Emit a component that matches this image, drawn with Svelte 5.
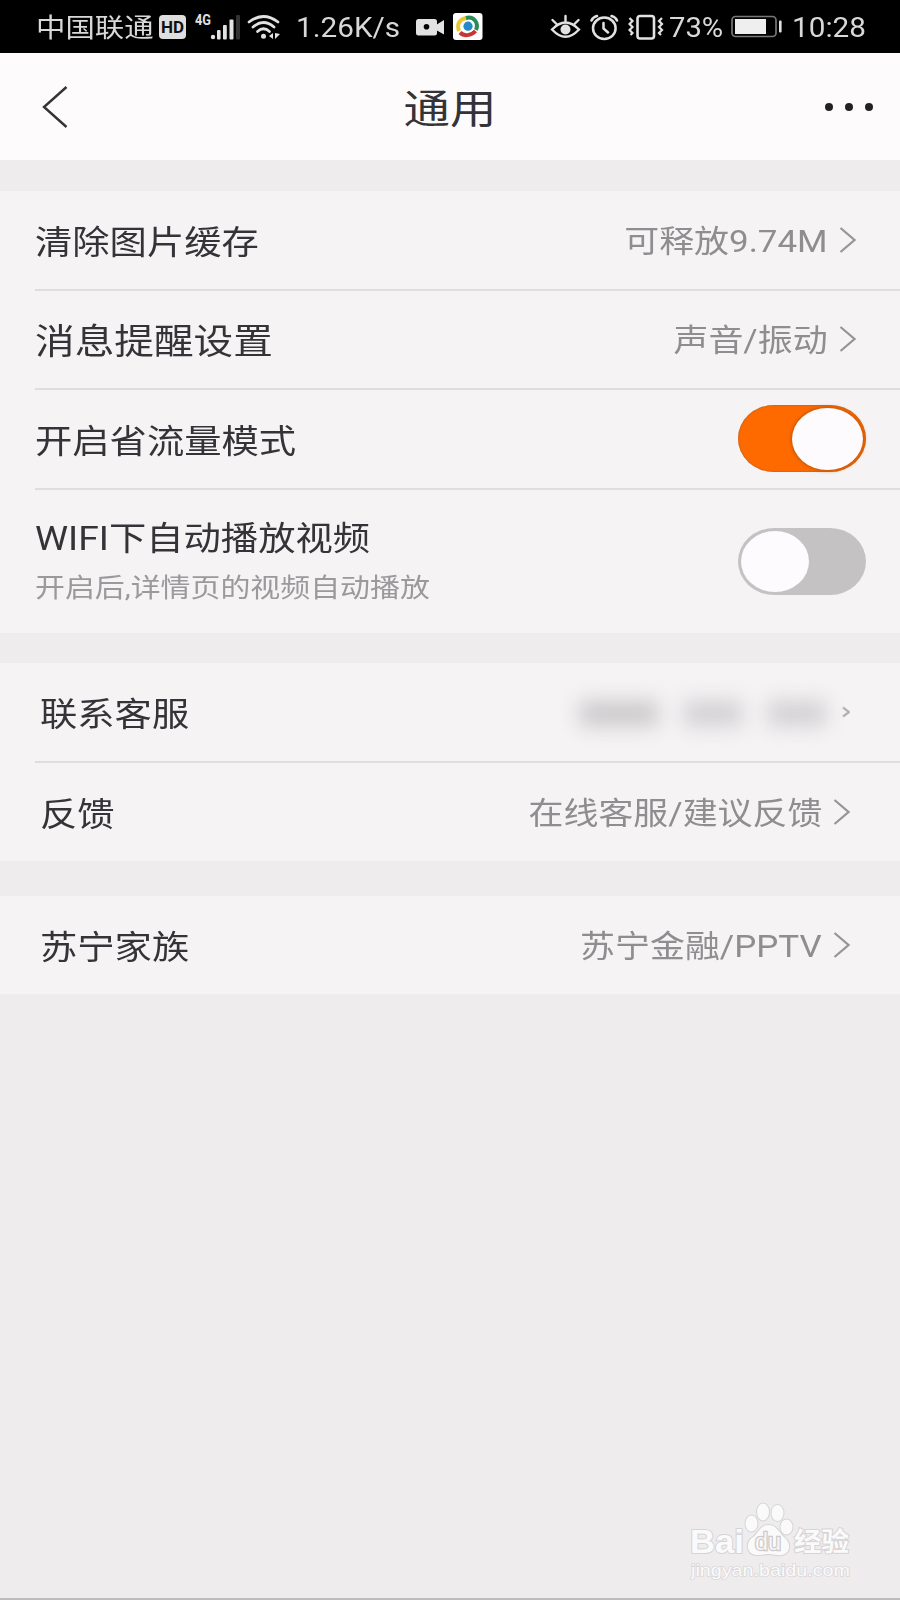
<script lang="ts">
	type Row = {
		label: string;
		value?: string;
		hint?: string;
		toggle?: boolean;
		masked?: boolean;
		large?: boolean;
	};

	type Group = { id: string; inset?: boolean; rows: Row[] };

	let groups: Group[] = $state([
		{
			id: 'general',
			rows: [
				{ label: '清除图片缓存', value: '可释放9.74M' },
				{ label: '消息提醒设置', value: '声音/振动', large: true },
				{ label: '开启省流量模式', toggle: true },
				{ label: 'WIFI下自动播放视频', hint: '开启后,详情页的视频自动播放', toggle: false }
			]
		},
		{
			id: 'support',
			inset: true,
			rows: [
				{ label: '联系客服', masked: true },
				{ label: '反馈', value: '在线客服/建议反馈' }
			]
		},
		{
			id: 'family',
			inset: true,
			rows: [{ label: '苏宁家族', value: '苏宁金融/PPTV' }]
		}
	]);
</script>

<div class="screen">
	<div class="status">
		<span class="carrier">中国联通</span>
		<span class="hd">HD</span>
		<svg class="signal" width="46" height="28" viewBox="0 0 46 28" aria-hidden="true">
			<text x="0" y="12" textLength="16" lengthAdjust="spacingAndGlyphs">4G</text>
			<circle cx="18" cy="24" r="2.2" />
			<rect x="22" y="17" width="3.6" height="9.5" rx="1" />
			<rect x="28" y="12" width="3.8" height="14.5" rx="1" />
			<rect x="34.5" y="6.5" width="4" height="20" rx="1" />
			<rect x="41" y="2" width="4" height="24.5" rx="1" fill="#333" />
		</svg>
		<svg class="wifi" width="35" height="28" viewBox="0 0 35 28" aria-hidden="true">
			<g fill="none" stroke="#e2e2e2" stroke-width="2.7" stroke-linecap="round">
				<path d="M2 9Q16.5-2 31 9" />
				<path d="M6 14Q16.5 5 27 14" />
				<path d="M10.5 18.5Q16.5 13 22.5 18.5" />
			</g>
			<circle cx="16.5" cy="23.3" r="2.5" />
			<path d="M26 20v6l-4-3zM28 20v6l5-5z" />
		</svg>
		<span class="speed">1.26K/s</span>
		<svg class="camera" width="29" height="19" viewBox="0 0 29 19" aria-hidden="true">
			<rect x="0" y="1" width="21" height="16.5" rx="2.5" />
			<path d="M20 7l8-5v14.5L20 12z" />
			<circle cx="10.5" cy="8.7" r="2.8" fill="#000" />
		</svg>
		<svg class="app" width="30" height="28" viewBox="0 0 30 28" aria-hidden="true">
			<rect width="29.5" height="27" rx="3" fill="#fff" />
			<g fill="none" stroke-width="4">
				<path d="M6 18C3 10 8 5 15 5" stroke="#e9c632" />
				<path d="M13 5C21 3 26 10 23 17" stroke="#2b8c59" />
				<path d="M7 19.5C11 23.5 18 23 22.5 18" stroke="#cb3434" />
			</g>
			<circle cx="15" cy="13.2" r="4.6" fill="#2588c8" />
		</svg>
		<svg class="eye" width="32" height="27" viewBox="0 0 32 27" aria-hidden="true">
			<g fill="none" stroke="#e2e2e2" stroke-width="2.4" stroke-linecap="round">
				<path d="M2 15.5Q15.5 1.5 29 15.5Q15.5 30 2 15.5z" />
				<path d="M15.5 7V2M6.5 10L2.5 6M24.5 10l4-4" />
			</g>
			<circle cx="15.5" cy="15.5" r="5" />
		</svg>
		<svg class="alarm" width="29" height="27" viewBox="0 0 29 27" aria-hidden="true">
			<g fill="none" stroke="#e2e2e2" stroke-width="2.5" stroke-linecap="round">
				<ellipse cx="14.3" cy="14.3" rx="11.3" ry="10.7" />
				<path d="M1.5 6.5Q3 3 7 2M21.5 2Q25.5 3 27 6.5M13.5 9v5.5l4.5 4" />
			</g>
		</svg>
		<svg class="vibrate" width="36" height="26" viewBox="0 0 36 26" aria-hidden="true">
			<g fill="none" stroke="#e2e2e2" stroke-width="2.2">
				<rect x="9.5" y="2" width="16.5" height="22.5" rx="2.5" stroke-width="2.6" />
				<path d="M1.5 4l3 3-3 3 3 3-3 3 3 3-2 2M34 4l-3 3 3 3-3 3 3 3-3 3 2 2" />
			</g>
		</svg>
		<span class="percent">73%</span>
		<svg class="battery" width="52" height="24" viewBox="0 0 52 24" aria-hidden="true">
			<rect x="1" y="1.5" width="44" height="20" rx="3.5" fill="none" stroke="#777" stroke-width="1.7" />
			<rect x="4" y="4" width="31" height="15" fill="#efefef" />
			<rect x="48" y="5.5" width="2.6" height="12" rx="1" />
		</svg>
		<span class="clock">10:28</span>
	</div>

	<header>
		<button class="back" aria-label="返回">
			<svg width="26" height="42" viewBox="0 0 26 42" aria-hidden="true">
				<path d="M24.5 1L2 21l22.5 20" fill="none" stroke="#333" stroke-width="2.4" />
			</svg>
		</button>
		<h1>通用</h1>
		<button class="more" aria-label="更多">
			<i></i><i></i><i></i>
		</button>
	</header>

	<main>
		{#each groups as group (group.id)}
			<section class:inset={group.inset}>
				{#each group.rows as row (row.label)}
					<div class="row" class:tall={row.hint}>
						<div class="text">
							<span class="label" class:large={row.large}>{row.label}</span>
							{#if row.hint}
								<span class="hint">{row.hint}</span>
							{/if}
						</div>
						{#if row.toggle !== undefined}
							<button
								class="toggle"
								class:on={row.toggle}
								role="switch"
								aria-checked={row.toggle}
								aria-label={row.label}
								onclick={() => (row.toggle = !row.toggle)}
							>
								<span class="thumb"></span>
							</button>
						{:else if row.masked}
							<!-- phone number, hidden behind a blur -->
							<span class="masked"><i></i><i></i><i></i></span>
							<svg class="chevron small" width="8" height="12" viewBox="0 0 8 12" aria-hidden="true">
								<path d="M1 1.5l6 4.5-6 4.5" />
							</svg>
						{:else}
							<span class="value">{row.value}</span>
							<svg class="chevron" width="17" height="26" viewBox="0 0 17 26" aria-hidden="true">
								<path d="M1.5 1L15.500 13l-14 12" />
							</svg>
						{/if}
					</div>
				{/each}
			</section>
		{/each}
	</main>

	<svg class="watermark" width="170" height="84" viewBox="0 0 170 84" aria-hidden="true">
		<g class="mark">
			<ellipse cx="61.5" cy="23.5" rx="6" ry="8" />
			<ellipse cx="73" cy="12" rx="6" ry="8.5" />
			<ellipse cx="87.5" cy="13" rx="6" ry="8" />
			<ellipse cx="96.5" cy="27" rx="6" ry="7.5" />
			<path
				d="M78 25C70 25 68 34 62 38C55 43 57 54 66 55C71 55.5 74 54 79 54C84 54 88 56 92 55C101 53 101 43 95 38C89 33 87 25 78 25z"
			/>
			<text class="brand" x="0" y="53" textLength="54" lengthAdjust="spacingAndGlyphs">Bai</text>
			<text class="brand cn" x="104" y="51" textLength="55" lengthAdjust="spacingAndGlyphs">经验</text>
		</g>
		<text class="du" x="65" y="50" textLength="26" lengthAdjust="spacingAndGlyphs">du</text>
		<text class="url" x="1" y="75.5" textLength="159" lengthAdjust="spacingAndGlyphs">jingyan.baidu.com</text>
	</svg>
</div>

<style>
	:global(body) {
		margin: 0;
		background: #eeeced;
	}

	.screen {
		position: relative;
		box-sizing: border-box;
		width: 900px;
		height: 1600px;
		overflow: hidden;
		background: #eeeced;
		border-bottom: 2px solid #bdbbbc;
		font-family: Roboto, 'Noto Sans CJK SC', sans-serif;
		color: #343337;
	}

	button {
		padding: 0;
		border: none;
		background: none;
		cursor: pointer;
	}

	/* status bar */
	.status {
		display: flex;
		align-items: center;
		box-sizing: border-box;
		height: 53px;
		padding: 1px 0 0 36px;
		background: #000;
		color: #d8d8d8;
		fill: #e2e2e2;
		font-size: 27px;
		line-height: 30px;
		white-space: nowrap;
	}

	.status > * {
		flex: none;
	}

	.carrier,
	.speed,
	.percent,
	.clock {
		padding-top: 2px;
		transform-origin: left center;
	}

	.carrier {
		width: 123px;
		font-size: 26px;
		line-height: 32px;
		transform: scaleX(1.13);
	}

	.hd {
		width: 27px;
		height: 24px;
		border-radius: 4px;
		background: #dedede;
		color: #111;
		font-size: 17px;
		font-weight: 700;
		line-height: 25px;
		text-align: center;
	}

	.signal {
		margin-left: 9px;
	}

	.signal text {
		font-size: 14px;
		font-weight: 700;
	}

	.wifi {
		margin-left: 6px;
	}

	.speed {
		width: 120px;
		margin-left: 14px;
		transform: scaleX(1.1);
	}

	.app {
		margin-left: 8px;
	}

	.eye {
		margin-left: 67px;
	}

	.alarm {
		margin-left: 8px;
	}

	.vibrate {
		margin-left: 9px;
	}

	.percent {
		width: 62px;
		margin-left: 5px;
		transform: scaleX(1.08);
	}

	.clock {
		margin-left: 9px;
		transform: scaleX(1.1);
	}

	/* title bar */
	header {
		display: flex;
		align-items: center;
		justify-content: space-between;
		box-sizing: border-box;
		height: 107px;
		padding: 0 27px 0 42px;
		background: #fdfbfc;
	}

	.back,
	.more {
		display: flex;
		width: 48px;
	}

	.more {
		justify-content: space-between;
	}

	.more i {
		width: 8px;
		height: 8px;
		border-radius: 50%;
		background: #222;
	}

	h1 {
		margin: 7px 0 0;
		font-size: 40px;
		font-weight: 400;
		line-height: 50px;
		transform: translateX(-8px) scaleX(1.16);
	}

	/* setting groups */
	main {
		padding-top: 31px;
	}

	section {
		margin-bottom: 30.5px;
		padding-left: 35px;
		background: #f5f3f4;
	}

	.inset {
		margin-bottom: 34.5px;
	}

	.row {
		display: flex;
		align-items: center;
		box-sizing: border-box;
		height: 99.5px;
		padding-right: 44px;
		border-bottom: 2px solid #dfdddf;
	}

	.row:last-child {
		height: 98.5px;
		border-bottom: none;
	}

	.row.tall {
		height: 143px;
	}

	.row:has(.toggle) {
		padding-right: 34px;
	}

	.inset .row {
		padding-right: 50px;
	}

	.inset .text {
		padding-left: 5px;
	}

	.text {
		display: flex;
		flex: 1;
		flex-direction: column;
		align-items: flex-start;
		padding-top: 6px;
		white-space: nowrap;
	}

	.label {
		font-size: 33.3px;
		line-height: 48px;
		transform: scaleX(1.12);
		transform-origin: left center;
	}

	.label.large {
		font-size: 35.4px;
	}

	.hint {
		color: #9b999b;
		font-size: 26.6px;
		line-height: 50px;
		transform: scaleX(1.125);
		transform-origin: left center;
	}

	.value {
		padding-top: 4px;
		color: #8f8d8f;
		font-size: 31.2px;
		line-height: 48px;
		white-space: nowrap;
		transform: scaleX(1.12);
		transform-origin: right center;
	}

	.chevron {
		margin-left: 11px;
		fill: none;
		stroke: #969496;
		stroke-width: 2.2;
	}

	.toggle {
		display: flex;
		align-items: center;
		box-sizing: border-box;
		width: 128px;
		height: 67px;
		padding: 0 3px;
		border-radius: 36px / 33.5px;
		background: #c4c2c3;
	}

	.thumb {
		width: 68px;
		height: 61px;
		border-radius: 50%;
		background: #fdfbfd;
	}

	.toggle.on {
		justify-content: flex-end;
		background: #ff6a00;
		box-shadow: inset 0 0 2px #8c5a30;
	}

	.toggle.on .thumb {
		width: 71px;
		height: 62px;
		box-shadow: 0 0 4px #a04a08;
	}

	.masked {
		display: flex;
		gap: 26px;
		margin-top: 4px;
		filter: blur(10px);
	}

	.masked i {
		width: 58px;
		height: 25px;
		background: #d2d0d3;
	}

	.masked i:first-child {
		width: 78px;
		background: #cbc9cb;
	}

	.chevron.small {
		margin-left: 16px;
		stroke: #b4b2b4;
	}

	/* corner mark over the page */
	.watermark {
		position: absolute;
		right: 40px;
		bottom: 14px;
		overflow: visible;
	}

	.mark {
		fill: #fbfafb;
		stroke: #d6d4d5;
		stroke-width: 2;
		paint-order: stroke;
	}

	.brand {
		font-family: 'Liberation Sans', sans-serif;
		font-size: 34px;
		font-weight: 700;
	}

	.brand.cn {
		font-family: 'Noto Sans CJK SC', sans-serif;
		font-size: 26px;
	}

	.du {
		fill: #f6f5f6;
		stroke: #cbc9ca;
		stroke-width: 2.5;
		paint-order: stroke;
		font-family: 'Liberation Sans', sans-serif;
		font-size: 23px;
	}

	.url {
		fill: #fbfafb;
		stroke: #dad8d9;
		stroke-width: 1.5;
		paint-order: stroke;
		font-family: 'Liberation Sans', sans-serif;
		font-size: 17px;
	}
</style>
